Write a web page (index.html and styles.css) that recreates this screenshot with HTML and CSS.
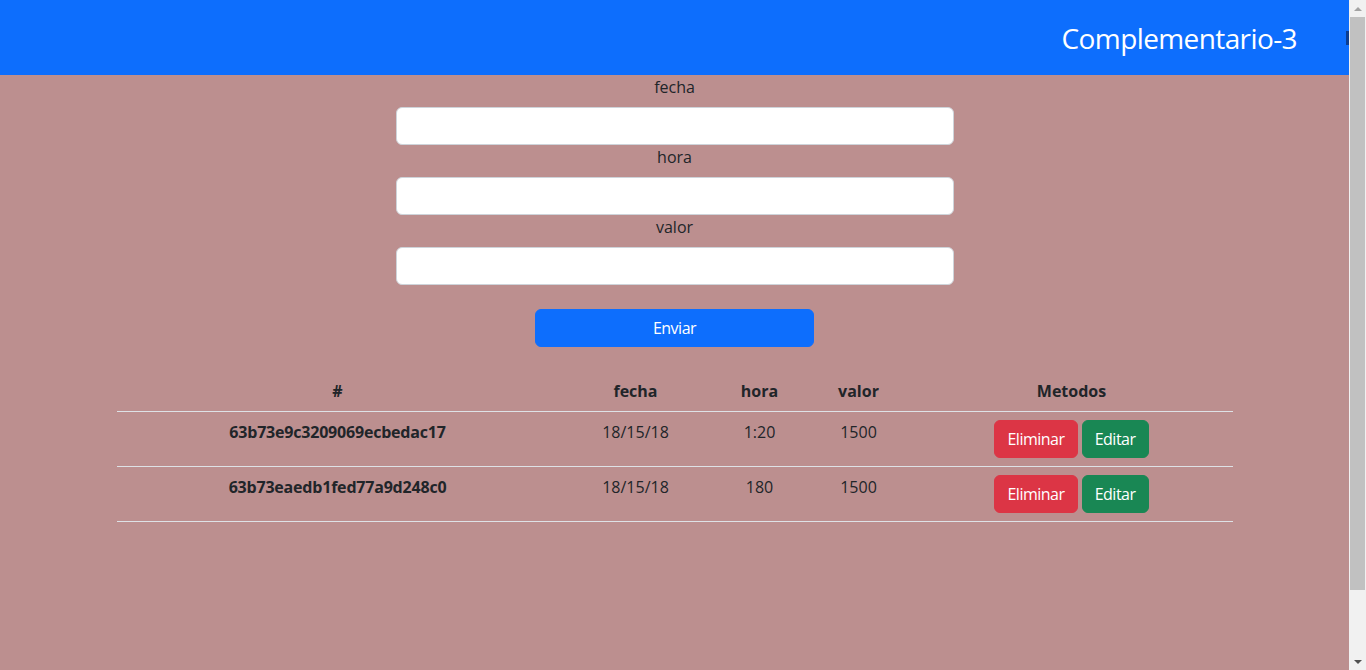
FILE: index.html
```html
<!DOCTYPE html>
<html lang="es">
<head>
<meta charset="utf-8">
<title>Complementario-3</title>
<link rel="stylesheet" href="styles.css">
</head>
<body>
<div class="window">
  <div class="page">
    <nav class="navbar">
      <span class="brand">Complementario-3</span>
      <span class="toggler"></span>
    </nav>
    <main class="content">
      <form class="form">
        <label class="label" for="fecha">fecha</label>
        <input class="input" id="fecha" type="text">
        <label class="label" for="hora">hora</label>
        <input class="input" id="hora" type="text">
        <label class="label" for="valor">valor</label>
        <input class="input" id="valor" type="text">
        <button class="btn btn-primary btn-send" type="button">Enviar</button>
      </form>
      <table class="table">
        <thead>
          <tr>
            <th class="c-id">#</th>
            <th class="c-fecha">fecha</th>
            <th class="c-hora">hora</th>
            <th class="c-valor">valor</th>
            <th class="c-met">Metodos</th>
          </tr>
        </thead>
        <tbody>
          <tr>
            <th class="id">63b73e9c3209069ecbedac17</th>
            <td>18/15/18</td>
            <td>1:20</td>
            <td>1500</td>
            <td><button class="btn btn-danger" type="button">Eliminar</button> <button class="btn btn-success" type="button">Editar</button></td>
          </tr>
          <tr>
            <th class="id">63b73eaedb1fed77a9d248c0</th>
            <td>18/15/18</td>
            <td>180</td>
            <td>1500</td>
            <td><button class="btn btn-danger" type="button">Eliminar</button> <button class="btn btn-success" type="button">Editar</button></td>
          </tr>
        </tbody>
      </table>
    </main>
  </div>
  <div class="scrollbar">
    <span class="arrow arrow-up"></span>
    <span class="thumb"></span>
    <span class="track-rest"></span>
    <span class="arrow arrow-down"></span>
  </div>
</div>
</body>
</html>
```
FILE: styles.css
```css
* { box-sizing: border-box; }
html, body {
  margin: 0;
  height: 100%;
  overflow: hidden;
}
body {
  font-family: "Open Sans", "Noto Sans", sans-serif;
  font-size: 16px;
  line-height: 24px;
  color: #212529;
}
.window {
  display: flex;
  height: 670px;
}
.page {
  flex: 1;
  background: rosybrown;
  display: flex;
  flex-direction: column;
  overflow: hidden;
}
.navbar {
  height: 75px;
  background: #0d6efd;
  display: flex;
  align-items: center;
  justify-content: flex-end;
  flex-shrink: 0;
}
.brand {
  color: #fff;
  font-size: 28px;
  line-height: 36px;
  margin-right: 49px;
  letter-spacing: -0.6px;
}
.toggler {
  width: 3px;
  height: 14px;
  background: #0b3d91;
}
.content {
  display: flex;
  flex-direction: column;
  align-items: center;
}
.form {
  width: 558px;
  display: flex;
  flex-direction: column;
  align-items: center;
}
.label {
  display: block;
  text-align: center;
  line-height: 24px;
  height: 24px;
  margin-bottom: 8px;
}
.input {
  width: 558px;
  height: 38px;
  margin: 0;
  border: 1px solid #ced4da;
  border-radius: 6px;
  background: #fff;
  font: inherit;
}
.btn {
  display: inline-block;
  height: 38px;
  padding: 6px 12px;
  border: 1px solid transparent;
  border-radius: 6px;
  font: inherit;
  font-size: 16px;
  line-height: 24px;
  letter-spacing: -0.5px;
  color: #fff;
  cursor: pointer;
}
.btn-primary { background: #0d6efd; border-color: #0d6efd; }
.btn-danger { background: #dc3545; border-color: #dc3545; }
.btn-success { background: #198754; border-color: #198754; }
.btn-send {
  width: 279px;
  margin-top: 24px;
}
.table {
  width: 1116px;
  margin-top: 24px;
  border-collapse: collapse;
  text-align: center;
}
.table th, .table td {
  padding: 8px;
  border-bottom: 1px solid #dee2e6;
  vertical-align: top;
}
.table thead th { vertical-align: bottom; }
.table th { font-weight: 700; }
.table .id { letter-spacing: -0.2px; }
.c-id { width: 442px; }
.c-fecha { width: 154px; }
.c-hora { width: 94px; }
.c-valor { width: 104px; }
.c-met { width: 322px; }
.scrollbar {
  width: 17px;
  background: #f1f1f1;
  display: flex;
  flex-direction: column;
  align-items: center;
}
.arrow {
  width: 17px;
  height: 17px;
  flex-shrink: 0;
  display: flex;
  align-items: center;
  justify-content: center;
}
.arrow-up::before {
  content: "";
  border-left: 4px solid transparent;
  border-right: 4px solid transparent;
  border-bottom: 4px solid #a3a3a3;
}
.arrow-down::before {
  content: "";
  border-left: 4px solid transparent;
  border-right: 4px solid transparent;
  border-top: 4px solid #505050;
}
.thumb {
  width: 15px;
  height: 573px;
  background: #c1c1c1;
  flex-shrink: 0;
}
.track-rest { flex: 1; }
```
